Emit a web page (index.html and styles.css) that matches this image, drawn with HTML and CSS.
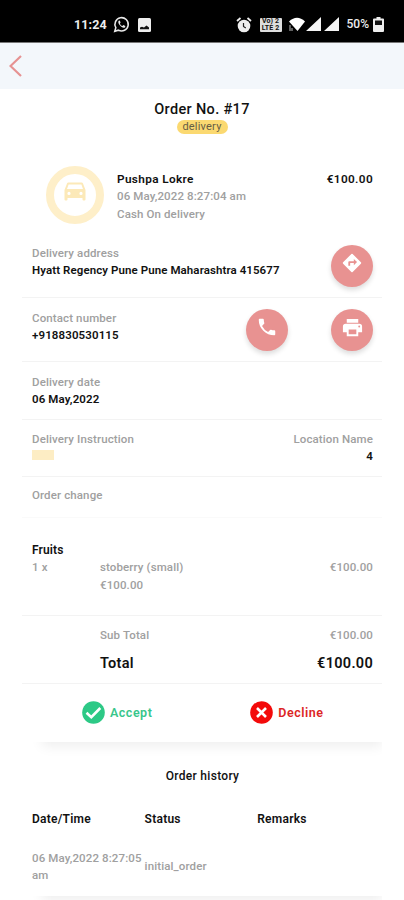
FILE: index.html
```html
<!DOCTYPE html>
<html lang="en">
<head>
  <meta charset="UTF-8">
  <meta name="viewport" content="width=device-width, initial-scale=1.0">
  <title>Order Details</title>
  <link rel="stylesheet" href="styles.css">
</head>
<body>

<div class="status-bar">
  <span class="time">11:24</span>
  <svg class="whatsapp" width="17" height="17" viewBox="0 0 24 24">
    <path d="M2.5 21.5l1.5-5A9.4 9.4 0 1 1 7.6 20z" fill="none" stroke="#e8e8e8" stroke-width="2.2"/>
    <path d="M8.6 6.5c-1.8 1.1-1.6 3.6 1 6.7s5.4 4.3 7.6 2.6l.2-1.7-2.7-1.5-1.5 1.4c-1.5-.5-2.7-1.7-3.5-3.2l1-1.5-1-2.6z" fill="#e8e8e8"/>
  </svg>
  <svg class="gallery" width="13" height="14" viewBox="0 0 13 14">
    <rect width="13" height="14" rx="1.5" fill="#eee"/>
    <path d="M2 11.200V9.500l2-.8 2 .8 2.500-2 2.500 2v1.700z" fill="#111"/>
  </svg>
  <svg class="alarm" width="16" height="16" viewBox="0 0 16 16">
    <path d="M1 4l3.500-3M15 4l-3.500-3" stroke="#eee" stroke-width="1.8"/>
    <circle cx="8" cy="9" r="6.3" fill="#eee"/>
    <path d="M7.500 6v3.500l2.300 1.500" fill="none" stroke="#222" stroke-width="1.2"/>
  </svg>
  <span class="volte"><b>Vo) 2</b><b>LTE 2</b></span>
  <svg class="signals" width="51" height="15" viewBox="0 0 51 15">
    <path d="M0 4.500Q8 -3 16 4.500L8.500 14z" fill="#fff"/>
    <path d="M1 14V8M3 14v-3" stroke="#bbb" stroke-width="1"/>
    <path d="M17 14L32 0v14zM35 14L50 0v14z" fill="#f4f4f4"/>
  </svg>
  <span class="percent">50%</span>
  <svg class="battery" width="11" height="15" viewBox="0 0 11 15">
    <path d="M3.500 0h4v1.500H10q1 0 1 1V14q0 1-1 1H1q-1 0-1-1V2.500q0-1 1-1h2.500z" fill="#eee"/>
    <path d="M2 3.500h7V8H2z" fill="#111"/>
  </svg>
</div>

<div class="toolbar">
  <svg width="14" height="22" viewBox="0 0 14 22">
    <path d="M12 1L1.500 11 12 21" fill="none" stroke="#e69292" stroke-width="2.2"/>
  </svg>
</div>

<div class="heading">
  <h1>Order No. #17</h1>
  <span class="pill">delivery</span>
</div>

<div class="card">
  <div class="row customer">
    <div class="avatar">
      <svg width="26" height="24" viewBox="0 0 24 24">
        <path fill="#fce9b8" fill-rule="evenodd" d="M20 3.500Q19.700 2.500 18.600 2.500H5.400Q4.300 2.500 4 3.500L1.500 10v9.500q0 1 1 1h1q1 0 1-1V18h15v1.500q0 1 1 1h1q1 0 1-1V10zM5.600 4.500h12.800L20 9H4zM6 15a1.600 1.600 0 1 1 0-3.200A1.600 1.600 0 0 1 6 15zm12 0a1.600 1.600 0 1 1 0-3.200A1.600 1.600 0 0 1 18 15z"/>
      </svg>
    </div>
    <div class="info">
      <strong class="name">Pushpa Lokre</strong>
      <span>06 May,2022 8:27:04 am</span>
      <span>Cash On delivery</span>
    </div>
    <strong class="price">€100.00</strong>
  </div>

  <div class="row address">
    <div class="info">
      <span>Delivery address</span>
      <strong>Hyatt Regency Pune Pune Maharashtra 415677</strong>
    </div>
    <div class="round-btn">
      <svg width="22" height="22" viewBox="0 0 24 24">
        <path fill="#fff" d="M21.700 11.300l-9-9a1 1 0 0 0-1.400 0l-9 9a1 1 0 0 0 0 1.400l9 9a1 1 0 0 0 1.400 0l9-9a1 1 0 0 0 0-1.400zM14 14.500V12h-4v3H8v-4q0-1 1-1h5V7.500l3.500 3.500z"/>
      </svg>
    </div>
  </div>

  <div class="row contact">
    <div class="info">
      <span>Contact number</span>
      <strong>+918830530115</strong>
    </div>
    <div class="buttons">
      <div class="round-btn">
        <svg width="22" height="22" viewBox="0 0 24 24">
          <path fill="#fff" d="M6.600 10.800a15 15 0 0 0 6.600 6.600l2.200-2.200a1 1 0 0 1 1-.25 11.400 11.400 0 0 0 3.600.57 1 1 0 0 1 1 1V20a1 1 0 0 1-1 1A17 17 0 0 1 3 4a1 1 0 0 1 1-1h3.500a1 1 0 0 1 1 1c0 1.250.2 2.450.57 3.570a1 1 0 0 1-.25 1z"/>
        </svg>
      </div>
      <div class="round-btn">
        <svg width="23" height="23" viewBox="0 0 24 24">
          <path fill="#fff" d="M19 8H5a3 3 0 0 0-3 3v6h4v4h12v-4h4v-6a3 3 0 0 0-3-3zm-3 11H8v-5h8zm3-7a1 1 0 1 1 0-2 1 1 0 0 1 0 2zM18 3H6v4h12z"/>
        </svg>
      </div>
    </div>
  </div>

  <div class="row date">
    <div class="info">
      <span>Delivery date</span>
      <strong>06 May,2022</strong>
    </div>
  </div>

  <div class="row instruction">
    <div class="info">
      <span>Delivery Instruction</span>
      <i class="note"></i>
    </div>
    <div class="info right">
      <span>Location Name</span>
      <strong>4</strong>
    </div>
  </div>

  <div class="row change">
    <span>Order change</span>
  </div>

  <div class="row items">
    <strong>Fruits</strong>
    <div class="item">
      <span class="col">1 x</span>
      <span class="grow">stoberry (small)<br>€100.00</span>
      <span>€100.00</span>
    </div>
  </div>

  <div class="row totals">
    <div class="item">
      <span class="col"></span>
      <span class="grow">Sub Total</span>
      <span>€100.00</span>
    </div>
    <div class="item total">
      <span class="col"></span>
      <strong class="grow">Total</strong>
      <strong>€100.00</strong>
    </div>
  </div>

  <div class="actions">
    <div class="action accept">
      <svg width="23" height="23" viewBox="0 0 23 23">
        <circle cx="11.500" cy="11.500" r="11.300" fill="#2dc986"/>
        <path d="M4.500 11.700l4.800 4.500 9-9.200" fill="none" stroke="#fff" stroke-width="2.600"/>
      </svg>
      <span>Accept</span>
    </div>
    <div class="action decline">
      <svg width="23" height="23" viewBox="0 0 23 23">
        <circle cx="11.500" cy="11.500" r="11.300" fill="#f30a0a"/>
        <path d="M7 7l9 9M16 7l-9 9" stroke="#fff" stroke-width="2.600"/>
      </svg>
      <span>Decline</span>
    </div>
  </div>
</div>

<div class="history">
  <h2>Order history</h2>
  <div class="history-row head">
    <strong>Date/Time</strong>
    <strong>Status</strong>
    <strong>Remarks</strong>
  </div>
  <div class="history-row">
    <span>06 May,2022 8:27:05 am</span>
    <span>initial_order</span>
    <span></span>
  </div>
</div>

</body>
</html>
```

FILE: styles.css
```css
* {
  box-sizing: border-box;
}

body {
  margin: 0;
  height: 900px;
  overflow: hidden;
  background: #fff;
  color: #111;
  font-family: Roboto, "Liberation Sans", sans-serif;
  font-size: 11.5px;
  font-weight: 500;
  line-height: 17.3px;
  letter-spacing: 0.12px;
}

h1, h2 {
  margin: 0;
  font-weight: 500;
}

svg {
  display: block;
  flex: none;
}

strong {
  font-weight: 600;
}

/* status bar */
.status-bar {
  display: flex;
  align-items: center;
  height: 43px;
  padding: 7px 20px 0 74px;
  background: #000;
  color: #eee;
  border-bottom: 1px solid #777;
}

.time {
  width: 39px;
  font-size: 12.5px;
  font-weight: 700;
}

.gallery {
  margin-left: 8px;
}

.alarm {
  margin-left: auto;
}

.volte {
  display: flex;
  flex-direction: column;
  width: 22px;
  height: 14px;
  margin: 0 7px 0 8px;
  border-radius: 1px;
  background: #ddd;
  color: #111;
  font-size: 7px;
  line-height: 7px;
  text-align: center;
  white-space: nowrap;
}

.percent {
  margin: 0 4px 0 7px;
  font-size: 12px;
  letter-spacing: 0;
}

.toolbar {
  display: flex;
  align-items: center;
  height: 46px;
  padding-left: 9px;
  background: #f3f7fb;
}

.heading {
  display: flex;
  flex-direction: column;
  align-items: center;
  height: 51px;
  padding-top: 12px;
}

.heading h1 {
  font-size: 14.5px;
  line-height: 18px;
  letter-spacing: 0.35px;
}

.pill {
  margin-top: 1px;
  width: 51px;
  height: 14px;
  border-radius: 7px;
  background: #fbd971;
  color: #665d45;
  font-size: 11px;
  font-weight: 400;
  line-height: 14px;
  letter-spacing: 0.2px;
  text-align: center;
}

/* order card */
.card {
  height: 602px;
  margin: 0 22px;
  box-shadow: 10px 14px 12px -10px #eee;
  clip-path: inset(0 0 -30px 0);
}

.row {
  display: flex;
  justify-content: space-between;
  padding: 0 9px 0 10px;
  color: #a0a0a0;
  border-bottom: 1px solid #f3f3f3;
}

.row strong {
  color: #111;
}

.info {
  display: flex;
  flex-direction: column;
  white-space: nowrap;
}

.right {
  text-align: right;
}

.customer {
  height: 91px;
  padding-top: 31px;
  border-bottom: none;
}

.customer strong {
  font-size: 11.8px;
  letter-spacing: 0.35px;
}

.customer .price {
  margin-left: auto;
}

.avatar {
  display: flex;
  justify-content: center;
  width: 58px;
  height: 58px;
  margin: -5px 13px 0 14px;
  padding-top: 6px;
  border: 8px solid #feefc9;
  border-radius: 50%;
}

.address {
  height: 67px;
  padding-top: 14px;
}

.address strong {
  letter-spacing: 0.09px;
}

.contact {
  height: 64px;
  padding-top: 11px;
}

.contact .info,
.date .info {
  padding-top: 1px;
}

.buttons {
  display: flex;
  gap: 43px;
}

.round-btn {
  display: flex;
  justify-content: center;
  width: 42px;
  height: 42px;
  padding-top: 7px;
  border-radius: 50%;
  background: #e89291;
  box-shadow: 0 3px 5px #ddd;
}

.date {
  height: 58px;
  padding-top: 11px;
}

.instruction {
  height: 57px;
  padding-top: 11px;
}

.note {
  width: 22px;
  height: 10px;
  margin-top: 2px;
  background: #fdedc4;
}

.change {
  height: 41px;
  padding-top: 10px;
  border-bottom-color: #fafafa;
}

.items {
  display: block;
  height: 98px;
  padding-top: 24px;
}

.items > strong {
  font-size: 12px;
}

.item {
  display: flex;
}

.col {
  width: 68px;
}

.grow {
  flex: 1;
}

.totals {
  display: block;
  height: 68px;
  padding-top: 11px;
}

.total {
  margin-top: 10px;
  font-size: 14.5px;
  line-height: 20px;
  letter-spacing: 0.3px;
}

.actions {
  display: flex;
  gap: 98px;
  padding: 17px 0 0 60px;
}

.action {
  display: flex;
  align-items: center;
  gap: 5px;
  font-size: 12.5px;
  font-weight: 600;
  letter-spacing: 0.5px;
}

.accept {
  color: #37c68b;
}

.decline {
  color: #dc2525;
}

/* history */
.history {
  height: 154px;
  margin: 0 22px;
  padding: 26px 9px 0 10px;
  box-shadow: 10px 14px 12px -10px #eee;
  clip-path: inset(0 0 -30px 0);
}

.history h2 {
  font-size: 12px;
  letter-spacing: 0.3px;
  text-align: center;
}

.history-row {
  display: grid;
  grid-template-columns: repeat(3, 112.6px);
  align-items: center;
  margin-top: 21px;
  color: #a0a0a0;
}

.head {
  margin-top: 26px;
  color: #111;
  font-size: 12px;
  letter-spacing: 0.25px;
}
```
